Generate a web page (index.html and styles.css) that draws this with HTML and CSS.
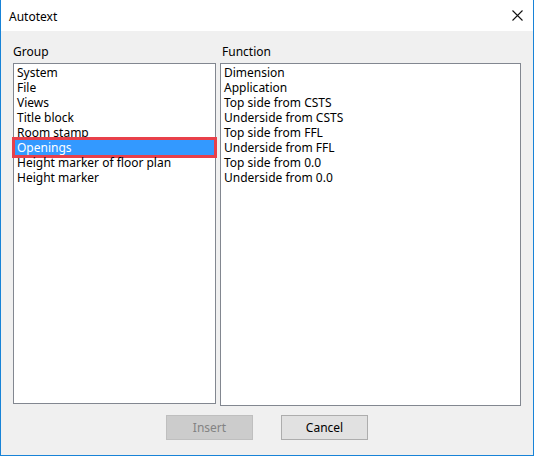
FILE: index.html
```html
<!DOCTYPE html>
<html>
<head>
<meta charset="utf-8">
<link rel="stylesheet" href="styles.css">
</head>
<body>
<div class="window">
  <div class="titlebar">
    <span class="title">Autotext</span>
    <span class="close">
      <svg width="11" height="11" viewBox="0 0 11 11"><path d="M0.5 0.5 L10.5 10.5 M10.5 0.5 L0.5 10.5" stroke="#111" stroke-width="1.1" fill="none"/></svg>
    </span>
  </div>
  <div class="content">
    <div class="columns">
      <div class="col col-group">
        <div class="label">Group</div>
        <ul class="list list-group">
          <li>System</li>
          <li>File</li>
          <li>Views</li>
          <li>Title block</li>
          <li>Room stamp</li>
          <li class="selected">Openings<span class="mark"></span></li>
          <li>Height marker of floor plan</li>
          <li>Height marker</li>
        </ul>
      </div>
      <div class="col col-func">
        <div class="label label-func">Function</div>
        <ul class="list list-func">
          <li>Dimension</li>
          <li>Application</li>
          <li>Top side from CSTS</li>
          <li>Underside from CSTS</li>
          <li>Top side from FFL</li>
          <li>Underside from FFL</li>
          <li>Top side from 0.0</li>
          <li>Underside from 0.0</li>
        </ul>
      </div>
    </div>
    <div class="buttons">
      <button class="btn btn-disabled">Insert</button>
      <button class="btn">Cancel</button>
    </div>
  </div>
</div>
</body>
</html>
```
FILE: styles.css
```css
html, body {
  margin: 0;
  padding: 0;
}
body {
  font-family: "Noto Sans", "Open Sans", sans-serif;
  font-size: 12px;
  color: #000;
  background: #f0f0f0;
}
.window {
  width: 534px;
  height: 456px;
  box-sizing: border-box;
  border: 1px solid #1883d7;
  border-top: none;
  background: #f0f0f0;
  display: flex;
  flex-direction: column;
}
.titlebar {
  height: 31px;
  background: #fff;
  display: flex;
  align-items: center;
  justify-content: space-between;
  padding: 0 10px 0 8px;
  flex: none;
}
.title {
  line-height: 15px;
  margin-top: 1px;
}
.close {
  display: flex;
}
.content {
  display: flex;
  flex-direction: column;
  padding: 13px 12px 0 12px;
}
.columns {
  display: flex;
  gap: 4px;
  align-items: flex-start;
}
.col {
  display: flex;
  flex-direction: column;
}
.col-group { width: 203px; }
.col-func { width: 301px; }
.label {
  line-height: 15px;
  height: 15px;
  margin-bottom: 4px;
}
.label-func { margin-left: 2px; }
.list {
  list-style: none;
  margin: 0;
  padding: 1px 0 0 0;
  background: #fff;
  border: 1px solid #828790;
  box-sizing: border-box;
}
.list-group { height: 341px; }
.list-func { height: 343px; }
.list li {
  line-height: 15px;
  height: 15px;
  padding-left: 3px;
  white-space: nowrap;
  position: relative;
}
.list li.selected {
  background: #3399ff;
  color: #fff;
}
.mark {
  position: absolute;
  left: -2px;
  right: -2px;
  top: -3px;
  bottom: -3px;
  border: 3px solid #e8404a;
}
.buttons {
  display: flex;
  justify-content: center;
  gap: 28px;
  margin-top: 9px;
}
.btn {
  width: 87px;
  height: 25px;
  box-sizing: border-box;
  font-family: inherit;
  font-size: 12px;
  background: #e1e1e1;
  border: 1px solid #adadad;
  color: #000;
  padding: 0;
  margin: 0;
}
.btn-disabled {
  background: #cccccc;
  border-color: #bfbfbf;
  color: #838383;
}
```
